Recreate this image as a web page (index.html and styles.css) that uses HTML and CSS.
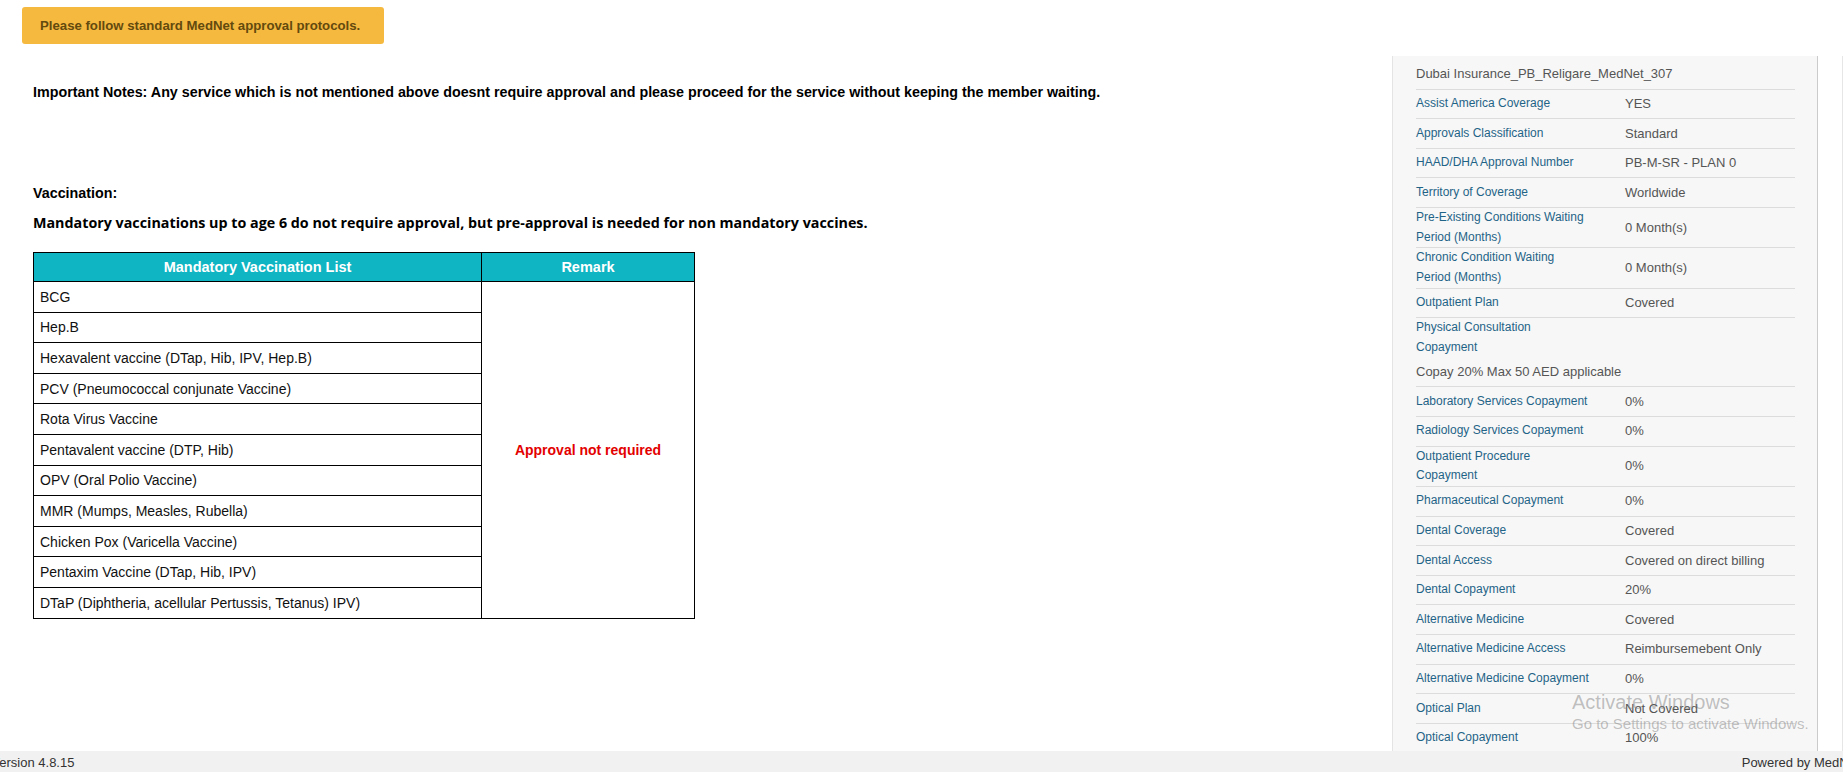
FILE: index.html
```html
<!DOCTYPE html>
<html>
<head>
<meta charset="utf-8">
<title>MedNet</title>
<link rel="stylesheet" href="styles.css">
</head>
<body>
<div class="page">
  <div class="main">
    <div class="left">
      <div class="alert">Please follow standard MedNet approval protocols.</div>
      <div class="notes">
        <p class="note">Important Notes: Any service which is not mentioned above doesnt require approval and please proceed for the service without keeping the member waiting.</p>
        <p class="vac-title">Vaccination:</p>
        <p class="vac-desc">Mandatory vaccinations up to age 6 do not require approval, but pre-approval is needed for non mandatory vaccines.</p>
        <table class="vac">
          <thead>
            <tr><th class="c1">Mandatory Vaccination List</th><th class="c2">Remark</th></tr>
          </thead>
          <tbody>
            <tr><td>BCG</td><td class="remark" rowspan="11">Approval not required</td></tr>
            <tr><td>Hep.B</td></tr>
            <tr><td>Hexavalent vaccine (DTap, Hib, IPV, Hep.B)</td></tr>
            <tr><td>PCV (Pneumococcal conjunate Vaccine)</td></tr>
            <tr><td>Rota Virus Vaccine</td></tr>
            <tr><td>Pentavalent vaccine (DTP, Hib)</td></tr>
            <tr><td>OPV (Oral Polio Vaccine)</td></tr>
            <tr><td>MMR (Mumps, Measles, Rubella)</td></tr>
            <tr><td>Chicken Pox (Varicella Vaccine)</td></tr>
            <tr><td>Pentaxim Vaccine (DTap, Hib, IPV)</td></tr>
            <tr><td>DTaP (Diphtheria, acellular Pertussis, Tetanus) IPV)</td></tr>
          </tbody>
        </table>
      </div>
    </div>
    <aside class="panel">
      <div class="row"><div class="title">Dubai Insurance_PB_Religare_MedNet_307</div></div>
      <div class="row"><div class="lbl">Assist America Coverage</div><div class="val">YES</div></div>
      <div class="row"><div class="lbl">Approvals Classification</div><div class="val">Standard</div></div>
      <div class="row"><div class="lbl">HAAD/DHA Approval Number</div><div class="val">PB-M-SR - PLAN 0</div></div>
      <div class="row"><div class="lbl">Territory of Coverage</div><div class="val">Worldwide</div></div>
      <div class="row"><div class="lbl">Pre-Existing Conditions Waiting Period (Months)</div><div class="val">0 Month(s)</div></div>
      <div class="row"><div class="lbl">Chronic Condition Waiting Period (Months)</div><div class="val">0 Month(s)</div></div>
      <div class="row"><div class="lbl">Outpatient Plan</div><div class="val">Covered</div></div>
      <div class="row"><div class="lbl">Physical Consultation Copayment</div><div class="val">Copay 20% Max 50 AED applicable</div></div>
      <div class="row"><div class="lbl">Laboratory Services Copayment</div><div class="val">0%</div></div>
      <div class="row"><div class="lbl">Radiology Services Copayment</div><div class="val">0%</div></div>
      <div class="row"><div class="lbl">Outpatient Procedure Copayment</div><div class="val">0%</div></div>
      <div class="row"><div class="lbl">Pharmaceutical Copayment</div><div class="val">0%</div></div>
      <div class="row"><div class="lbl">Dental Coverage</div><div class="val">Covered</div></div>
      <div class="row"><div class="lbl">Dental Access</div><div class="val">Covered on direct billing</div></div>
      <div class="row"><div class="lbl">Dental Copayment</div><div class="val">20%</div></div>
      <div class="row"><div class="lbl">Alternative Medicine</div><div class="val">Covered</div></div>
      <div class="row"><div class="lbl">Alternative Medicine Access</div><div class="val">Reimbursemebent Only</div></div>
      <div class="row"><div class="lbl">Alternative Medicine Copayment</div><div class="val">0%</div></div>
      <div class="row"><div class="lbl">Optical Plan</div><div class="val">Not Covered</div></div>
      <div class="row"><div class="lbl">Optical Copayment</div><div class="val">100%</div></div>
    </aside>
    <div class="edge"></div>
  </div>
  <footer class="footer">
    <span class="ver">Version 4.8.15</span>
    <span class="powered">Powered by MedNet</span>
  </footer>
  <div class="watermark">
    <div class="wm1">Activate Windows</div>
    <div class="wm2">Go to Settings to activate Windows.</div>
  </div>
</div>
</body>
</html>
```
FILE: styles.css
```css
html, body {
  margin: 0;
  padding: 0;
  height: 100%;
  overflow: hidden;
}
body {
  font-family: "Liberation Sans", Arial, sans-serif;
  background: #fff;
  color: #000;
}
.page {
  position: relative;
  display: flex;
  flex-direction: column;
  height: 100vh;
}
.main {
  flex: 1;
  min-height: 0;
  display: flex;
  overflow: hidden;
}
.left {
  flex: 1;
  min-width: 0;
  padding: 7px 0 0 22px;
}
.alert {
  width: 362px;
  box-sizing: border-box;
  padding: 10px 18px;
  background: #f6b93f;
  border-radius: 3px;
  color: #634a0e;
  font-weight: bold;
  font-size: 13.2px;
  line-height: 17px;
  white-space: nowrap;
}
.notes {
  padding-left: 11px;
}
.notes p {
  margin: 0;
  font-weight: bold;
  font-size: 14.3px;
  line-height: 20px;
  color: #000;
}
.notes .note {
  margin-top: 38px;
}
.notes .vac-title {
  margin-top: 81px;
}
.notes .vac-desc {
  margin-top: 10px;
  font-family: "Open Sans", "Liberation Sans", sans-serif;
  font-size: 14.3px;
}
.vac {
  margin-top: 19px;
  border-collapse: collapse;
  width: 662px;
  font-size: 14px;
}
.vac th {
  background: #10b5c3;
  color: #fff;
  font-weight: bold;
  font-size: 14.5px;
  height: 28px;
  padding: 0;
  line-height: 20px;
  border: 1px solid #000;
  text-align: center;
}
.vac th.c1 {
  width: 447px;
}
.vac td {
  border: 1px solid #000;
  padding: 4.8px 6px;
  line-height: 20px;
  color: #111;
}
.vac td.remark {
  text-align: center;
  vertical-align: middle;
  color: #e30000;
  font-weight: bold;
}
.panel {
  width: 379px;
  margin-top: 56px;
  padding: 4px 22px 0 23px;
  background: #f7f7f7;
  border-left: 1px solid #e4e4e4;
  border-right: 1px solid #cbcbcb;
  flex: none;
}
.row {
  display: flex;
  flex-wrap: wrap;
  align-items: center;
  border-bottom: 1px solid #dcdcdc;
}
.title,
.lbl,
.val {
  min-height: 28.6px;
  display: flex;
  align-items: center;
  line-height: 19.7px;
}
.title {
  font-size: 13px;
  color: #555;
}
.lbl {
  width: 175px;
  margin-right: 34px;
  font-size: 12px;
  color: #1f6487;
}
.val {
  font-size: 13px;
  color: #555;
}
.edge {
  flex: none;
  margin: 56px 0 0 24px;
  border-left: 1px solid #e6e6e6;
}
.footer {
  flex: none;
  height: 21px;
  box-sizing: border-box;
  padding-top: 2px;
  display: flex;
  justify-content: space-between;
  overflow: hidden;
  background: #f1f1f1;
  font-size: 13px;
  line-height: 19px;
  color: #333;
  white-space: nowrap;
}
.ver {
  margin-left: -8.7px;
}
.powered {
  margin-right: -16.5px;
}
.watermark {
  position: absolute;
  left: 1572px;
  top: 690px;
  color: rgba(120, 120, 120, 0.45);
  pointer-events: none;
  white-space: nowrap;
}
.wm1 {
  font-size: 20px;
  line-height: 24px;
}
.wm2 {
  font-size: 15px;
  line-height: 20px;
}
```
